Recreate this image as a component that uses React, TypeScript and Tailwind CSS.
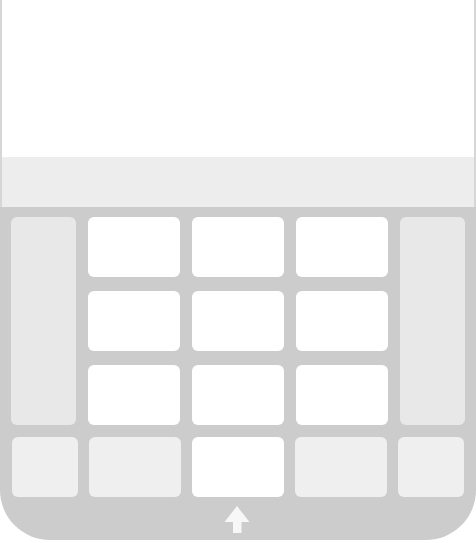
const Key = ({ tone }: { tone: "white" | "side" | "soft" }) => {
  const bg =
    tone === "white" ? "bg-white" : tone === "side" ? "bg-[#e8e8e8]" : "bg-[#efefef]";
  return <div className={`${bg} rounded-[6px] w-full h-full`} />;
};

const App = () => {
  return (
    <div className="w-[476px] h-[543px] bg-white flex flex-col overflow-hidden">
      {/* text area */}
      <div className="h-[157px] border-l-2 border-r-2 border-[#d6d6d6] bg-white" />

      {/* suggestion bar */}
      <div className="h-[50px] border-l-2 border-r-2 border-[#d6d6d6] bg-[#ededed]" />

      {/* keyboard */}
      <div className="h-[333px] bg-[#cccccc] rounded-b-[50px] pt-[10px] pl-[11px] pr-[12px] flex flex-col">
        <div className="grid grid-cols-[65px_92px_92px_92px_65px] grid-rows-[60px_60px_60px] gap-x-[12px] gap-y-[14px]">
          <div className="row-span-3">
            <Key tone="side" />
          </div>
          <Key tone="white" />
          <Key tone="white" />
          <Key tone="white" />
          <div className="row-span-3">
            <Key tone="side" />
          </div>
          <Key tone="white" />
          <Key tone="white" />
          <Key tone="white" />
          <Key tone="white" />
          <Key tone="white" />
          <Key tone="white" />
        </div>

        <div className="grid grid-cols-[66px_92px_92px_92px_66px] h-[60px] gap-x-[11px] mt-[12px] ml-[1px]">
          <Key tone="soft" />
          <Key tone="soft" />
          <Key tone="white" />
          <Key tone="soft" />
          <Key tone="soft" />
        </div>

        <div className="flex justify-center mt-[9px] pr-[2px]">
          <svg width="26" height="28" viewBox="0 0 26 28">
            <path d="M13 0 L25.5 16 L17.5 16 L17.5 27 L9 27 L9 16 L0.5 16 Z" fill="#f7f7f7" />
          </svg>
        </div>
      </div>
    </div>
  );
};

export default App;
